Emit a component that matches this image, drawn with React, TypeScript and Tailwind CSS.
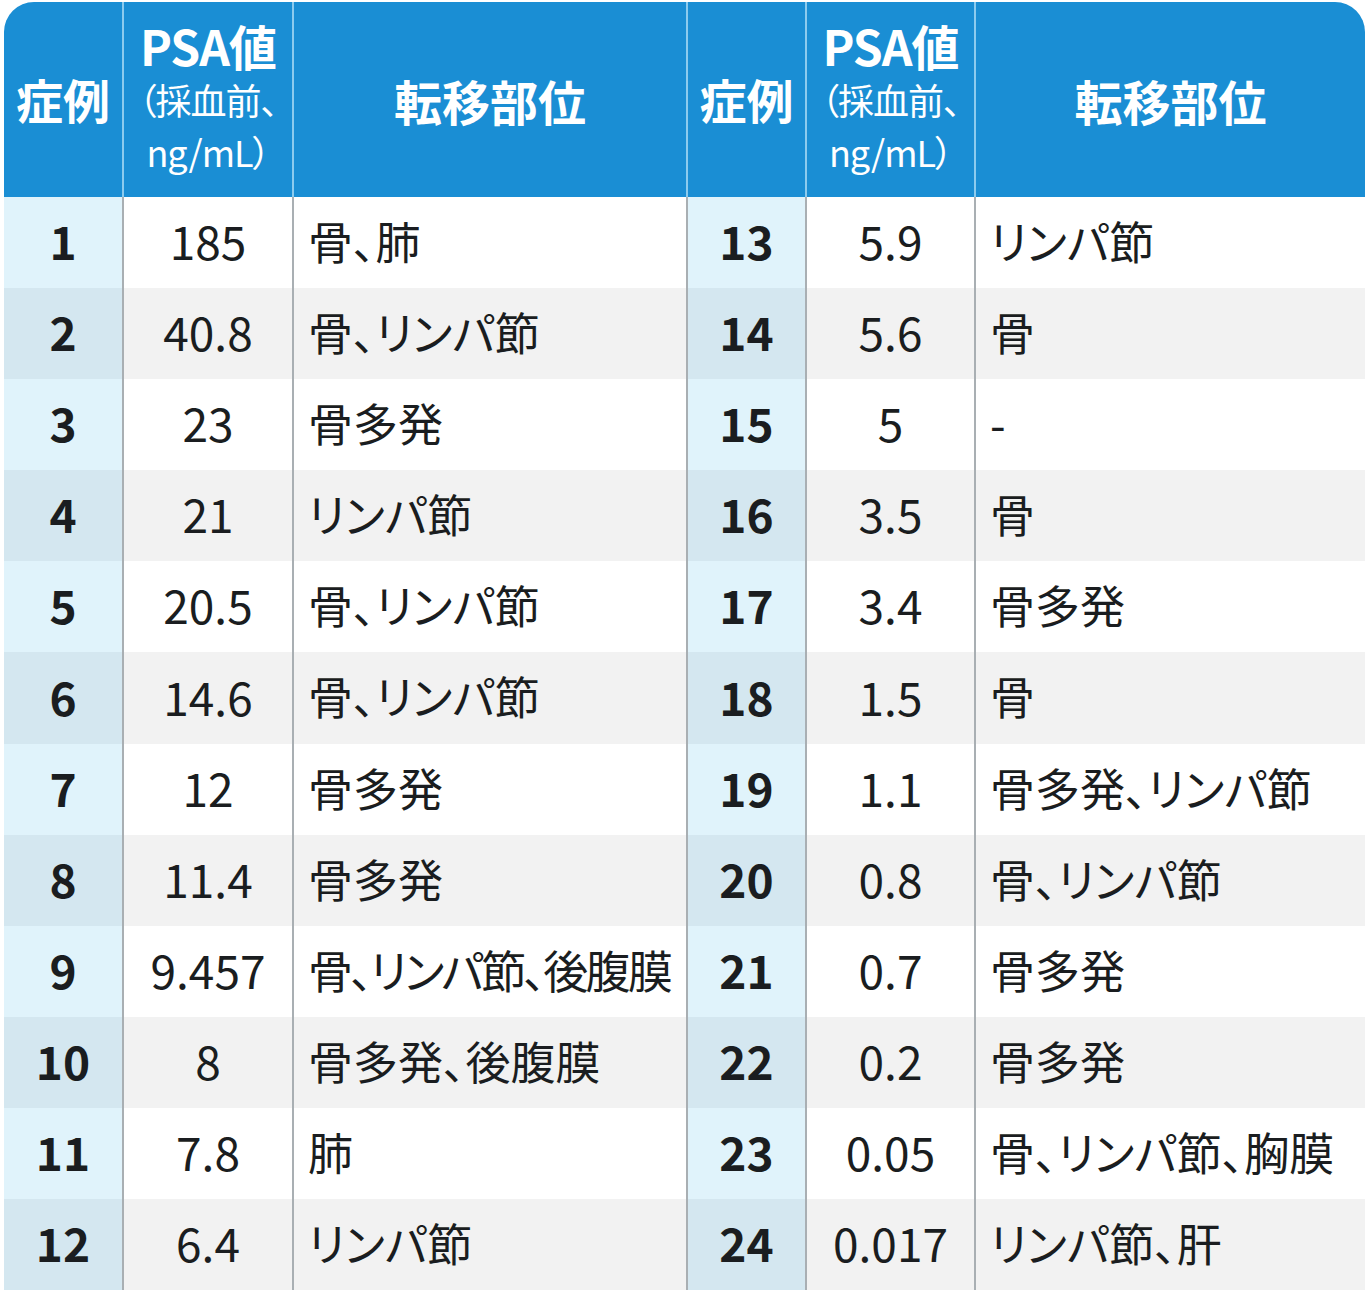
import React from "react";

const left = [
  ["1", "185", "骨、肺"],
  ["2", "40.8", "骨、リンパ節"],
  ["3", "23", "骨多発"],
  ["4", "21", "リンパ節"],
  ["5", "20.5", "骨、リンパ節"],
  ["6", "14.6", "骨、リンパ節"],
  ["7", "12", "骨多発"],
  ["8", "11.4", "骨多発"],
  ["9", "9.457", "骨、リンパ節、後腹膜"],
  ["10", "8", "骨多発、後腹膜"],
  ["11", "7.8", "肺"],
  ["12", "6.4", "リンパ節"],
];
const right = [
  ["13", "5.9", "リンパ節"],
  ["14", "5.6", "骨"],
  ["15", "5", "-"],
  ["16", "3.5", "骨"],
  ["17", "3.4", "骨多発"],
  ["18", "1.5", "骨"],
  ["19", "1.1", "骨多発、リンパ節"],
  ["20", "0.8", "骨、リンパ節"],
  ["21", "0.7", "骨多発"],
  ["22", "0.2", "骨多発"],
  ["23", "0.05", "骨、リンパ節、胸膜"],
  ["24", "0.017", "リンパ節、肝"],
];

function HeaderGroup({ first }: { first: boolean }) {
  return (
    <>
      <div
        className={`flex items-center justify-center text-[47px] font-bold ${first ? "w-[118px]" : "w-[119px] border-l-2 border-[#8ccbee]"}`}
      >
        症例
      </div>
      <div className={`flex flex-col items-center justify-center pb-[4px] border-l-2 border-[#8ccbee] ${first ? "w-[170px]" : "w-[169px]"}`}>
        <div className="text-[48px] font-bold leading-[55px] tracking-[-1px]">PSA値</div>
        <div className="text-[36px] leading-[52px] tracking-[-1px]">（採血前、</div>
        <div className="text-[36px] leading-[52px] tracking-[-1px]">ng/mL）</div>
      </div>
      <div className={`flex items-center justify-center border-l-2 border-[#8ccbee] text-[48px] font-bold ${first ? "w-[394px]" : "flex-1"}`}>
        転移部位
      </div>
    </>
  );
}

function BodyGroup({ row, idx, first }: { row: string[]; idx: number; first: boolean }) {
  const odd = idx % 2 === 1;
  const tight = row[2].length >= 10;
  return (
    <>
      <div
        className={`flex items-center justify-center pb-[4px] font-bold text-[46px] ${odd ? "bg-[#d4e7f0]" : "bg-[#e0f3fb]"} ${first ? "w-[118px]" : "w-[119px] border-l-2 border-[#a9afb3]"}`}
      >
        {row[0]}
      </div>
      <div className={`flex items-center justify-center pb-[4px] border-l-2 border-[#a9afb3] text-[46px] ${first ? "w-[170px]" : "w-[169px]"}`}>
        {row[1]}
      </div>
      <div
        className={`flex items-center pb-[4px] border-l-2 border-[#a9afb3] pl-[14px] text-[45px] whitespace-nowrap ${tight ? "tracking-[-2.7px]" : ""} ${first ? "w-[394px]" : "flex-1"}`}
      >
        {row[2]}
      </div>
    </>
  );
}

export default function App() {
  return (
    <div className="bg-white w-[1370px] h-[1294px] pt-[2px] pl-[4px] font-['Noto_Sans_CJK_JP',sans-serif] [font-feature-settings:'palt']">
      <div className="w-[1361px]">
        <div className="flex h-[195px] bg-[#1a8ed4] text-white rounded-t-[30px] overflow-hidden">
          <HeaderGroup first={true} />
          <HeaderGroup first={false} />
        </div>
        {left.map((r, i) => (
          <div
            key={i}
            className={`flex ${i % 11 === 5 ? "h-[92px]" : "h-[91px]"} ${i % 2 === 1 ? "bg-[#f2f2f2]" : "bg-white"} text-[#1a1d20]`}
          >
            <BodyGroup row={r} idx={i} first={true} />
            <BodyGroup row={right[i]} idx={i} first={false} />
          </div>
        ))}
      </div>
    </div>
  );
}
